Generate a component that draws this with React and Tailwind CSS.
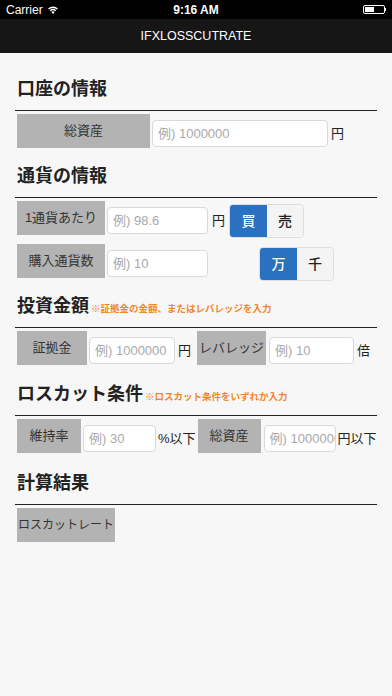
import React from "react"

const font = "font-['Liberation_Sans','Noto_Sans_CJK_JP',sans-serif]"

function Label({ w, size = "text-[13px]", children }) {
  return (
    <div
      className={`${w} ${size} h-[34px] shrink-0 bg-[#b3b3b3] text-[#333] flex items-center justify-center whitespace-nowrap overflow-hidden`}
    >
      {children}
    </div>
  )
}

function Field({ w, placeholder, ml = "ml-[2px]" }) {
  return (
    <input
      placeholder={placeholder}
      className={`${w} ${ml} mt-[6px] h-[27px] shrink-0 min-w-0 bg-white border border-[#d9d9d9] rounded-[4px] pl-[5px] text-[13px] text-[#333] placeholder:text-[#a9a9a9] outline-none`}
    />
  )
}

function Unit({ ml = "ml-[3px]", children }) {
  return <span className={`${ml} mt-[12px] text-[13px] leading-[16px] text-[#222] whitespace-nowrap`}>{children}</span>
}

function Toggle({ ml, a, b }) {
  return (
    <div className={`${ml} mt-[3px] flex h-[34px] rounded-[4px] overflow-hidden border border-[#dedede]`}>
      <div className="w-[37px] bg-[#2a71c2] text-white text-[14px] font-medium flex items-center justify-center">{a}</div>
      <div className="w-[36px] bg-[#f4f4f4] text-[#222] text-[14px] font-medium flex items-center justify-center">{b}</div>
    </div>
  )
}

function Section({ title, note, mt = "mt-[16px]", children }) {
  return (
    <div className={mt}>
      <div className="flex items-baseline h-[24px] pl-[2px]">
        <h2 className="text-[18px] leading-[24px] font-bold text-[#222]">{title}</h2>
        {note && <span className="ml-[2px] text-[9.5px] font-bold text-[#f0882a]">{note}</span>}
      </div>
      <div className="mt-[9px] h-px bg-[#222]"></div>
      <div className="mt-[3px] pl-[2px] flex flex-col gap-[9px]">{children}</div>
    </div>
  )
}

export default function App() {
  return (
    <div className={`${font} w-[392px] h-[696px] bg-[#f7f7f7] overflow-hidden`}>
      {/* Status bar */}
      <div className="h-[19px] bg-black text-white flex items-center justify-between px-[6px] text-[12px] relative">
        <div className="flex items-center gap-[4px]">
          <span>Carrier</span>
          <svg width="12" height="9" viewBox="0 0 12 9" fill="white">
            <path d="M6 9 L4.3 7 A2.6 2.6 0 0 1 7.7 7 Z" />
            <path d="M2.8 5.3 A4.8 4.8 0 0 1 9.2 5.3 L8.4 6.3 A3.5 3.5 0 0 0 3.6 6.3 Z" />
            <path d="M1.1 3.4 A7.3 7.3 0 0 1 10.9 3.4 L10 4.5 A6 6 0 0 0 2 4.5 Z" />
          </svg>
        </div>
        <span className="absolute left-1/2 -translate-x-1/2 font-bold text-[12px]">9:16 AM</span>
        <div className="flex items-center">
          <div className="w-[22px] h-[9px] border border-white rounded-[2px] p-[1px]">
            <div className="w-[9px] h-full bg-white"></div>
          </div>
          <div className="w-[1.5px] h-[3px] bg-white"></div>
        </div>
      </div>

      {/* Nav bar */}
      <div className="h-[34px] bg-[#161616] flex items-center justify-center text-white text-[12.5px]">
        IFXLOSSCUTRATE
      </div>

      <div className="px-[15px]">
        <Section title="口座の情報" mt="mt-[24px]">
          <div className="flex items-start h-[34px]">
            <Label w="w-[133px]">総資産</Label>
            <Field w="w-[176px]" placeholder="例) 1000000" />
            <Unit>円</Unit>
          </div>
        </Section>

        <Section title="通貨の情報">
          <div className="flex items-start h-[34px]">
            <Label w="w-[88px]">1通貨あたり</Label>
            <Field w="w-[101px]" placeholder="例) 98.6" />
            <Unit ml="ml-[4px]">円</Unit>
            <Toggle ml="ml-[4px]" a="買" b="売" />
          </div>
          <div className="flex items-start h-[34px]">
            <Label w="w-[88px]">購入通貨数</Label>
            <Field w="w-[101px]" placeholder="例) 10" />
            <Toggle ml="ml-[51px]" a="万" b="千" />
          </div>
        </Section>

        <Section title="投資金額" note="※証拠金の金額、またはレバレッジを入力">
          <div className="flex items-start h-[34px]">
            <Label w="w-[70px]">証拠金</Label>
            <Field w="w-[86px]" placeholder="例) 1000000" />
            <Unit>円</Unit>
            <div className="ml-[6px]">
              <Label w="w-[69px]">レバレッジ</Label>
            </div>
            <Field w="w-[85px]" ml="ml-[3px]" placeholder="例) 10" />
            <Unit>倍</Unit>
          </div>
        </Section>

        <Section title="ロスカット条件" note="※ロスカット条件をいずれか入力" mt="mt-[17px]">
          <div className="flex items-start h-[34px]">
            <Label w="w-[64px]">維持率</Label>
            <Field w="w-[73px]" placeholder="例) 30" />
            <Unit ml="ml-[2px]">%以下</Unit>
            <div className="ml-[2px]">
              <Label w="w-[63px]">総資産</Label>
            </div>
            <Field w="w-[72px]" ml="ml-[3px]" placeholder="例) 1000000" />
            <Unit ml="ml-[2px]">円以下</Unit>
          </div>
        </Section>

        <Section title="計算結果" mt="mt-[18px]">
          <div className="flex items-start h-[34px]">
            <Label w="w-[98px]" size="text-[12px]">ロスカットレート</Label>
          </div>
        </Section>
      </div>
    </div>
  )
}
